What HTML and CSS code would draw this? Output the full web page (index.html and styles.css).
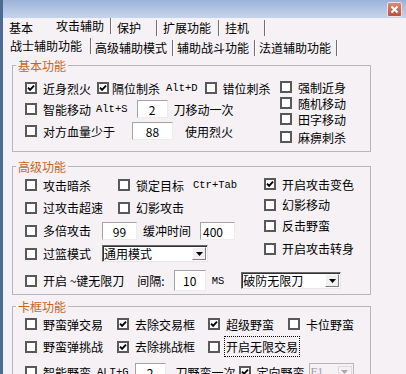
FILE: index.html
```html
<!DOCTYPE html>
<html lang="zh-CN">
<head>
    <meta charset="UTF-8">
    <title>攻击辅助</title>
    <link rel="stylesheet" href="styles.css">
</head>
<body>
<div class="window">
    <div class="titlebar">
        <span class="close-btn">
            <svg width="9" height="9" viewBox="0 0 9 9"><path d="M1.5 1.5L7.5 7.5M7.5 1.5L1.5 7.5" stroke="#fff" stroke-width="2"/></svg>
        </span>
    </div>

    <!-- main tabs -->
    <div class="tabs top-tabs">
        <span class="tab no-sep">基本</span>
        <span class="tab active">攻击辅助</span>
        <span class="tab">保护</span>
        <span class="tab">扩展功能</span>
        <span class="tab">挂机</span>
    </div>
    <div class="tabs sub-tabs">
        <span class="tab active">战士辅助功能</span>
        <span class="tab">高级辅助模式</span>
        <span class="tab">辅助战斗功能</span>
        <span class="tab">法道辅助功能</span>
    </div>

    <!-- 基本功能 -->
    <fieldset class="group basic">
        <legend>基本功能</legend>
        <div class="basic-body">
            <div class="basic-left">
                <div class="row">
                    <label class="chk"><span class="box"><svg viewBox="0 0 8 8"><path d="M1 3.6L3.1 5.8L7 1.6" /></svg></span>近身烈火</label>
                    <label class="chk tight gap-6"><span class="box"><svg viewBox="0 0 8 8"><path d="M1 3.6L3.1 5.8L7 1.6" /></svg></span>隔位制杀</label>
                    <span class="key gap-6">Alt+D</span>
                    <label class="chk gap-7"><span class="box"></span>错位刺杀</label>
                </div>
                <div class="row">
                    <label class="chk"><span class="box"></span>智能移动</label>
                    <span class="key gap-5">Alt+S</span>
                    <span class="field center gap-9 w31">2</span>
                    <span class="gap-6">刀移动一次</span>
                </div>
                <div class="row">
                    <label class="chk"><span class="box"></span>对方血量少于</label>
                    <span class="field center gap-17 w41">88</span>
                    <span class="gap-12">使用烈火</span>
                </div>
            </div>
            <div class="basic-right">
                <label class="chk"><span class="box"></span>强制近身</label>
                <label class="chk"><span class="box"></span>随机移动</label>
                <label class="chk"><span class="box"></span>田字移动</label>
                <label class="chk last"><span class="box"></span>麻痹刺杀</label>
            </div>
        </div>
    </fieldset>

    <!-- 高级功能 -->
    <fieldset class="group advanced">
        <legend>高级功能</legend>
        <div class="adv-body">
            <div class="adv-top">
                <div class="adv-left">
                    <div class="row">
                        <label class="chk col93"><span class="box"></span>攻击暗杀</label>
                        <label class="chk"><span class="box"></span>锁定目标</label>
                        <span class="key gap-9">Ctr+Tab</span>
                    </div>
                    <div class="row">
                        <label class="chk col93"><span class="box"></span>过攻击超速</label>
                        <label class="chk"><span class="box"></span>幻影攻击</label>
                    </div>
                    <div class="row">
                        <label class="chk"><span class="box"></span>多倍攻击</label>
                        <span class="field center gap-11 w35">99</span>
                        <span class="gap-6">缓冲时间</span>
                        <span class="field gap-9 w35">400</span>
                    </div>
                    <div class="row">
                        <label class="chk"><span class="box"></span>过篮模式</label>
                        <span class="combo gap-11 w106">通用模式<span class="drop"><svg width="7" height="4" viewBox="0 0 7 4"><path d="M0 0H7L3.5 4Z"/></svg></span></span>
                    </div>
                </div>
                <div class="adv-right">
                    <label class="chk"><span class="box"><svg viewBox="0 0 8 8"><path d="M1 3.6L3.1 5.8L7 1.6" /></svg></span>开启攻击变色</label>
                    <label class="chk"><span class="box"></span>幻影移动</label>
                    <label class="chk"><span class="box"></span>反击野蛮</label>
                    <label class="chk last"><span class="box"></span>开启攻击转身</label>
                </div>
            </div>
            <div class="row adv-bottom">
                <label class="chk"><span class="box"></span>开启 ~键无限刀</label>
                <span class="gap-13">间隔:</span>
                <span class="field center gap-9 w32 tall">10</span>
                <span class="key gap-6">MS</span>
                <span class="combo gap-17 w100">破防无限刀<span class="drop"><svg width="7" height="4" viewBox="0 0 7 4"><path d="M0 0H7L3.5 4Z"/></svg></span></span>
            </div>
        </div>
    </fieldset>

    <!-- 卡框功能 -->
    <fieldset class="group frames">
        <legend>卡框功能</legend>
        <div class="frames-body">
            <div class="row grid4 r1">
                <label class="chk"><span class="box"></span>野蛮弹交易</label>
                <label class="chk"><span class="box"><svg viewBox="0 0 8 8"><path d="M1 3.6L3.1 5.8L7 1.6" /></svg></span>去除交易框</label>
                <label class="chk"><span class="box"><svg viewBox="0 0 8 8"><path d="M1 3.6L3.1 5.8L7 1.6" /></svg></span>超级野蛮</label>
                <label class="chk"><span class="box"></span>卡位野蛮</label>
            </div>
            <div class="row grid4 r2">
                <label class="chk"><span class="box"></span>野蛮弹挑战</label>
                <label class="chk"><span class="box"><svg viewBox="0 0 8 8"><path d="M1 3.6L3.1 5.8L7 1.6" /></svg></span>去除挑战框</label>
                <label class="chk span2"><span class="box"></span><span class="focus">开启无限交易</span></label>
            </div>
            <div class="row r3">
                <label class="chk"><span class="box"></span>智能野蛮</label>
                <span class="key gap-6">ALT+G</span>
                <span class="field center gap-6 w31">2</span>
                <span class="gap-10">刀野蛮一次</span>
                <label class="chk gap-3"><span class="box"><svg viewBox="0 0 8 8"><path d="M1 3.6L3.1 5.8L7 1.6" /></svg></span>定向野蛮</label>
                <span class="combo disabled gap-4 w45">F1<span class="drop"><svg width="7" height="4" viewBox="0 0 7 4"><path d="M0 0H7L3.5 4Z"/></svg></span></span>
            </div>
        </div>
    </fieldset>
</div>
</body>
</html>
```

FILE: styles.css
```css
body {
    margin: 0;
    background-color: #f5f1f5;
    font-family: "Noto Sans CJK SC", "Liberation Sans", sans-serif;
    font-size: 12px;
    color: #000;
}

.window {
    width: 406px;
    height: 374px;
    overflow: hidden;
    box-sizing: border-box;
    border-left: 3px solid #4e6b8f;
    background-color: #f5f1f5;
}

/* title bar */
.titlebar {
    height: 18px;
    display: flex;
    justify-content: flex-end;
    align-items: center;
    padding-right: 4px;
    background: linear-gradient(to bottom, #9cb2d8 0%, #b4c6e4 55%, #c7d4ea 100%);
}

.close-btn {
    width: 15px;
    height: 15px;
    box-sizing: border-box;
    display: flex;
    justify-content: center;
    align-items: center;
    border: 1px solid #f3ded8;
    border-radius: 2px;
    background: linear-gradient(to bottom, #d88a78, #b9513f);
}

/* tabs */
.tabs {
    display: flex;
    align-items: flex-end;
    height: 20px;
}

.tab {
    line-height: 16px;
    padding: 0 7px 0 6px;
    min-width: 46px;
    box-sizing: border-box;
    margin-bottom: 2px;
    border-right: 1px solid #6f6f6f;
    box-shadow: 1px 0 0 #ffffff;
}

.tab.no-sep {
    border-right-color: transparent;
    box-shadow: none;
}

.tab.active {
    margin-bottom: 4px;
    padding: 0 6px 0 7px;
}

.sub-tabs .tab {
    padding: 0 5px 0 4px;
}

.sub-tabs .tab.active {
    padding: 0 8px 0 7px;
}

/* group boxes */
.group {
    width: 359px;
    box-sizing: border-box;
    margin: 0 0 0 9px;
    padding: 0;
    border: 1px solid #b9b5b9;
    min-inline-size: 0;
}

.group legend {
    margin-left: 3px;
    padding: 0 2px;
    line-height: 15px;
    color: #c8661c;
}

.advanced {
    margin-top: 7px;
}

.frames {
    margin-top: 4px;
}

.row {
    display: flex;
    align-items: center;
    white-space: nowrap;
}

/* checkbox */
.chk {
    display: inline-flex;
    align-items: center;
    gap: 6px;
    white-space: nowrap;
}

.chk.tight {
    gap: 3px;
}

.box {
    width: 12px;
    height: 12px;
    box-sizing: border-box;
    border: 2px solid #595959;
    background-color: #ffffff;
    display: flex;
    flex-shrink: 0;
}

.box svg {
    width: 8px;
    height: 8px;
    fill: none;
    stroke: #000;
    stroke-width: 1.9;
}

.key {
    font-family: "Liberation Mono", monospace;
    font-size: 10.5px;
}

.field {
    height: 18px;
    line-height: 18px;
    box-sizing: border-box;
    padding-left: 2px;
    background-color: #ffffff;
    border: 1px solid;
    border-color: #a3a3a3 #ececec #ececec #a3a3a3;
}

.field.center {
    text-align: center;
    padding-left: 0;
}

.field.tall {
    height: 21px;
    line-height: 20px;
}

.combo {
    height: 17px;
    box-sizing: border-box;
    display: flex;
    align-items: center;
    justify-content: space-between;
    padding-left: 1px;
    background-color: #ffffff;
    border: 1px solid;
    border-color: #6a6a6a #e6e6e6 #e6e6e6 #6a6a6a;
    box-shadow: inset 1px 1px 0 #333333;
}

.drop {
    width: 14px;
    height: 13px;
    box-sizing: border-box;
    display: flex;
    justify-content: center;
    align-items: center;
    margin-right: 1px;
    background-color: #f1eff1;
    border: 1px solid;
    border-color: #ffffff #7d7d7d #7d7d7d #ffffff;
}

.drop svg {
    fill: #000;
}

.combo.disabled {
    height: 19px;
    color: #a09ea0;
    font-family: "Liberation Serif", serif;
    background-color: #f5f1f5;
    border-color: #b7b7b7;
    box-shadow: none;
}

.combo.disabled .drop {
    border-color: #dcdcdc;
    background-color: #f5f1f5;
}

.combo.disabled .drop svg {
    fill: #a9a9a9;
}

/* spacing helpers */
.gap-3 { margin-left: 3px; }
.gap-4 { margin-left: 4px; }
.gap-5 { margin-left: 5px; }
.gap-6 { margin-left: 6px; }
.gap-7 { margin-left: 7px; }
.gap-9 { margin-left: 9px; }
.gap-10 { margin-left: 10px; }
.gap-11 { margin-left: 11px; }
.gap-12 { margin-left: 12px; }
.gap-13 { margin-left: 13px; }
.gap-17 { margin-left: 17px; }

.w31 { width: 31px; }
.w32 { width: 32px; }
.w35 { width: 35px; }
.w41 { width: 41px; }
.w45 { width: 45px; }
.w100 { width: 100px; }
.w106 { width: 106px; }

/* 基本功能 */
.basic-body {
    display: flex;
    padding: 5px 0 6px 12px;
}

.basic-left {
    width: 255px;
    display: grid;
    grid-template-rows: 20px 22px 22px;
}

.basic-right {
    display: flex;
    flex-direction: column;
    padding-top: 1px;
}

.basic-right .chk {
    height: 16px;
}

.basic-right .chk.last {
    margin-top: 2px;
}

/* 高级功能 */
.adv-body {
    padding: 0 0 2px 12px;
}

.adv-top {
    display: flex;
}

.adv-left {
    width: 239px;
    display: grid;
    grid-template-rows: 22px 23px 23px 23px;
}

.col93 {
    width: 93px;
}

.adv-right {
    display: grid;
    grid-template-rows: 20px 21px 21px;
    grid-auto-rows: 22px;
}

.adv-right .chk.last {
    margin-top: 3px;
}

.adv-bottom {
    height: 23px;
    margin-top: 4px;
}

/* 卡框功能 */
.frames-body {
    padding: 0 0 0 12px;
}

.grid4 {
    display: grid;
    grid-template-columns: 92px 91px 80px auto;
    align-items: center;
}

.span2 {
    grid-column: span 2;
}

.frames-body .r1 {
    height: 20px;
}

.frames-body .r2 {
    height: 23px;
    margin-top: 1px;
}

.frames-body .r3 {
    height: 22px;
    margin-top: 3px;
}

.focus {
    outline: 1px dotted #000;
    outline-offset: 1px;
}
```
